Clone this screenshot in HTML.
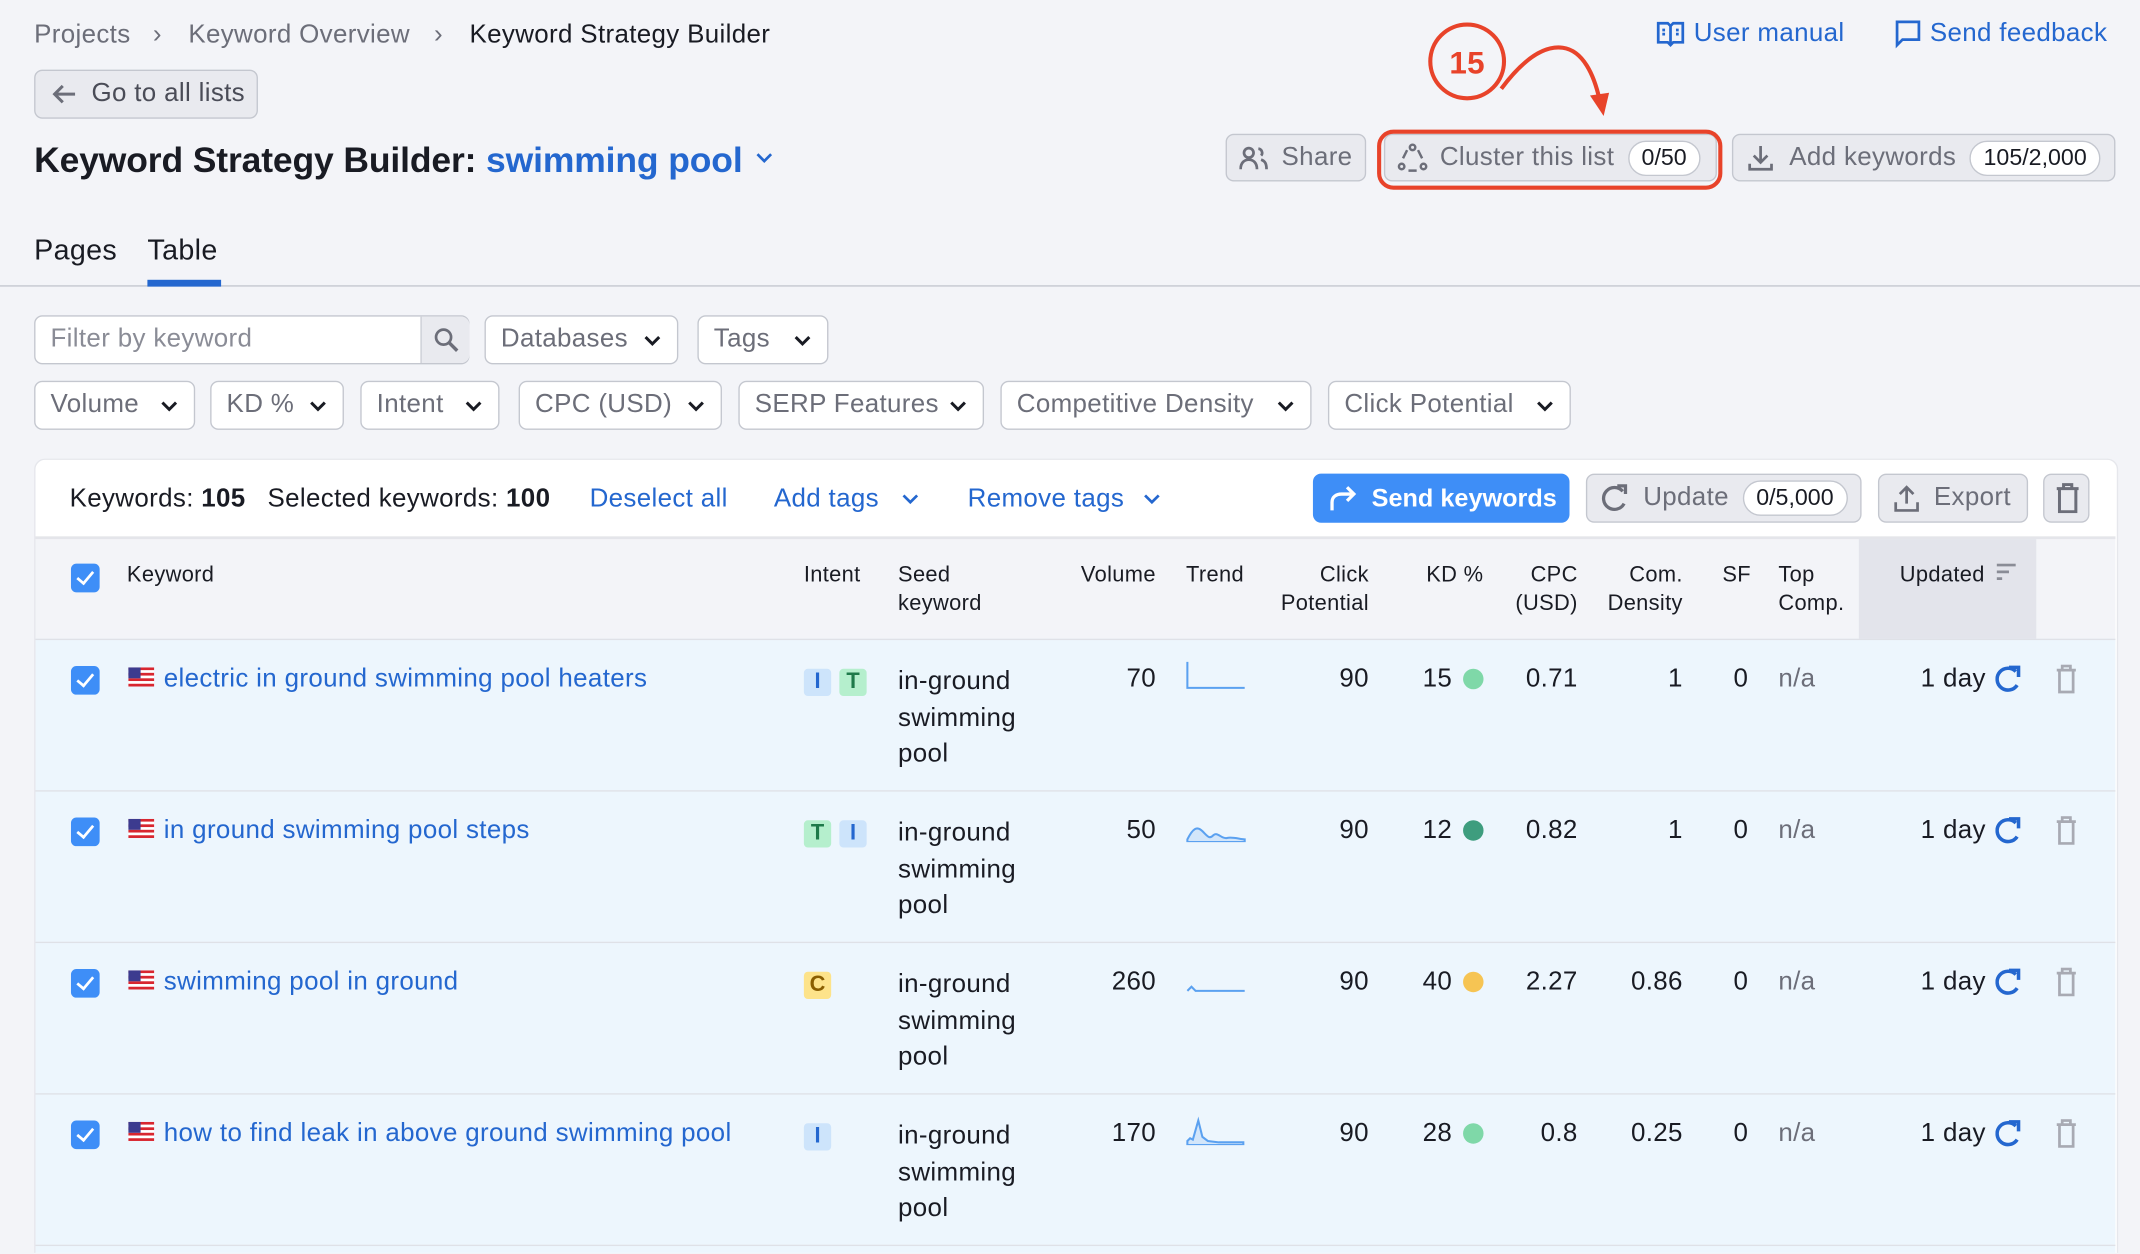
<!DOCTYPE html>
<html><head><meta charset="utf-8">
<style>
html,body{margin:0;padding:0;background:#f3f4f8;overflow:hidden;width:2140px;height:1254px}
#w{position:absolute;left:0;top:0;width:1568px;height:918px;overflow:hidden;transform:scale(1.364796);transform-origin:0 0;font-family:"Liberation Sans",sans-serif;color:#191b23;font-size:19px;letter-spacing:0.25px}
.a{position:absolute;white-space:nowrap}
div.a,div.r{margin-top:2px}
.g{color:#6c6e79}
.b{color:#2467cf}
.btn{position:absolute;box-sizing:border-box;border:1px solid #c4c7cf;border-radius:6px;background:#e9eaef;color:#6c6e79;display:flex;align-items:center;white-space:nowrap}
.dd{position:absolute;box-sizing:border-box;border:1px solid #c4c7cf;border-radius:6px;background:#fff;color:#6c6e79;height:36px;display:flex;align-items:center;padding-left:11px;white-space:nowrap}
.dd svg{position:absolute;right:11px;top:13px}
.pill{background:#fff;border:1px solid #c4c7cf;border-radius:14px;padding:2px 9px;font-size:17px;color:#191b23;margin-left:10px;letter-spacing:0}
.hd{position:absolute;font-size:16px;line-height:21px;color:#191b23;white-space:nowrap;margin-top:1px}
.row{position:absolute;left:26px;width:1524px;height:110px;background:#edf6fd;border-top:1px solid #dfe1e7}
.cb{position:absolute;width:21px;height:21px;border-radius:4px;background:#3e8ef7}
.cb:after{content:"";position:absolute;left:7px;top:3px;width:5px;height:10px;border:solid #fff;border-width:0 2.5px 2.5px 0;transform:rotate(40deg)}
.int{display:inline-block;width:20px;height:20px;border-radius:3px;text-align:center;line-height:20px;font-size:16px;margin-right:6px;font-weight:bold;letter-spacing:0}
.iI{background:#cde4fb;color:#2467cf}.iT{background:#b5efcd;color:#1e7a4a}.iC{background:#fde38a;color:#8a5e00}
.r{position:absolute;text-align:right;white-space:nowrap}
.dot{position:absolute;width:15px;height:15px;border-radius:50%}
</style></head><body><div id="w">

<div class="a g" style="left:25px;top:13px">Projects</div>
<div class="a g" style="left:112px;top:13px">›</div>
<div class="a g" style="left:138px;top:13px">Keyword Overview</div>
<div class="a g" style="left:318px;top:13px">›</div>
<div class="a" style="left:344px;top:13px">Keyword Strategy Builder</div>

<div class="a b" style="left:1213px;top:12px;display:flex;align-items:center"><svg width="22" height="22" viewBox="0 0 22 22"><path d="M2 3h7l2 2 2-2h7v14h-7l-2 2-2-2H2z" fill="none" stroke="#2467cf" stroke-width="2"/><path d="M11 5v14M5 8h2M5 11h2M15 8h2M15 11h2" stroke="#2467cf" stroke-width="2"/></svg><span style="margin-left:6px">User manual</span></div>
<div class="a b" style="left:1388px;top:12px;display:flex;align-items:center"><svg width="20" height="22" viewBox="0 0 20 22"><path d="M2 2h16v13H6l-4 4z" fill="none" stroke="#2467cf" stroke-width="2"/></svg><span style="margin-left:6px">Send feedback</span></div>

<div class="btn" style="left:25px;top:51px;width:164px;height:36px;padding-left:11px"><svg width="20" height="16" viewBox="0 0 20 16"><path d="M18 8H3M9 2L3 8l6 6" fill="none" stroke="#6c6e79" stroke-width="2.2"/></svg><span style="margin-left:10px;color:#4a4c57">Go to all lists</span></div>

<div class="a" style="left:25px;top:100px;font-size:26px;font-weight:bold;letter-spacing:-0.1px">Keyword Strategy Builder: <span style="color:#2467cf">swimming pool</span></div>
<svg class="a" style="left:553px;top:111px" width="14" height="10" viewBox="0 0 14 10"><path d="M2 2l5 5 5-5" fill="none" stroke="#2467cf" stroke-width="2"/></svg>

<div class="btn" style="left:898px;top:98px;width:103px;height:35px;padding-left:9px"><svg width="22" height="20" viewBox="0 0 22 20"><circle cx="7" cy="6" r="3.5" fill="none" stroke="#6c6e79" stroke-width="2"/><path d="M1 18c0-5 3-7 6-7s6 2 6 7M14 3a3 3 0 012 5M16 11c3 1 4 3 4 7" fill="none" stroke="#6c6e79" stroke-width="2"/></svg><span style="margin-left:9px">Share</span></div>
<div class="btn" style="left:1014px;top:98px;width:244px;height:35px;padding-left:9px"><svg width="22" height="22" viewBox="0 0 22 22"><circle cx="11" cy="3" r="2" fill="none" stroke="#6c6e79" stroke-width="1.8"/><circle cx="3" cy="17" r="2" fill="none" stroke="#6c6e79" stroke-width="1.8"/><circle cx="19" cy="17" r="2" fill="none" stroke="#6c6e79" stroke-width="1.8"/><path d="M7 5L4 11M15 5l3 6M8 20h6" fill="none" stroke="#6c6e79" stroke-width="1.8"/></svg><span style="margin-left:9px">Cluster this list</span><span class="pill">0/50</span></div>
<div style="position:absolute;left:1009px;top:95px;width:253px;height:44px;box-sizing:border-box;border:3px solid #e8432a;border-radius:12px"></div>
<div class="btn" style="left:1269px;top:98px;width:281px;height:35px;padding-left:10px"><svg width="20" height="20" viewBox="0 0 20 20"><path d="M10 1v12M5 8l5 5 5-5M2 14v4h16v-4" fill="none" stroke="#6c6e79" stroke-width="2"/></svg><span style="margin-left:11px">Add keywords</span><span class="pill">105/2,000</span></div>

<svg class="a" style="left:1040px;top:15px" width="160" height="80" viewBox="0 0 160 80"><circle cx="35" cy="30" r="27" fill="none" stroke="#e8432a" stroke-width="3"/><text x="35" y="39" text-anchor="middle" font-family="Liberation Sans" font-weight="bold" font-size="23" fill="#e8432a">15</text><path d="M60 50C75 30 90 18 105 20C120 22 128 40 132 58" fill="none" stroke="#e8432a" stroke-width="3"/><path d="M125 55l10 15 4-17z" fill="#e8432a"/></svg>

<div class="a" style="left:25px;top:170px;font-size:21px">Pages</div>
<div class="a" style="left:108px;top:170px;font-size:21px">Table</div>
<div class="a" style="left:0;top:209px;width:1568px;height:1px;background:#c4c7cf;margin:0"></div>
<div class="a" style="left:108px;top:205px;width:54px;height:5px;background:#2467cf;margin:0"></div>

<div class="dd" style="left:25px;top:231px;width:319px;color:#8a8c96">Filter by keyword</div>
<div class="a" style="left:308px;top:232px;width:35px;height:34px;background:#e9eaef;border-left:1px solid #c4c7cf;border-radius:0 6px 6px 0;margin:0"><svg style="position:absolute;left:9px;top:8px" width="18" height="18" viewBox="0 0 18 18"><circle cx="7" cy="7" r="5.5" fill="none" stroke="#6c6e79" stroke-width="2"/><path d="M11 11l6 6" stroke="#6c6e79" stroke-width="2.5"/></svg></div>
<div class="dd" style="left:355px;top:231px;width:142px">Databases<svg width="14" height="9" viewBox="0 0 14 9"><path d="M2 2l5 5 5-5" fill="none" stroke="#191b23" stroke-width="2.2"/></svg></div>
<div class="dd" style="left:511px;top:231px;width:96px">Tags<svg width="14" height="9" viewBox="0 0 14 9"><path d="M2 2l5 5 5-5" fill="none" stroke="#191b23" stroke-width="2.2"/></svg></div>

<div class="dd" style="left:25px;top:279px;width:118px">Volume<svg width="14" height="9" viewBox="0 0 14 9"><path d="M2 2l5 5 5-5" fill="none" stroke="#191b23" stroke-width="2.2"/></svg></div>
<div class="dd" style="left:154px;top:279px;width:98px">KD %<svg width="14" height="9" viewBox="0 0 14 9"><path d="M2 2l5 5 5-5" fill="none" stroke="#191b23" stroke-width="2.2"/></svg></div>
<div class="dd" style="left:264px;top:279px;width:102px">Intent<svg width="14" height="9" viewBox="0 0 14 9"><path d="M2 2l5 5 5-5" fill="none" stroke="#191b23" stroke-width="2.2"/></svg></div>
<div class="dd" style="left:380px;top:279px;width:149px">CPC (USD)<svg width="14" height="9" viewBox="0 0 14 9"><path d="M2 2l5 5 5-5" fill="none" stroke="#191b23" stroke-width="2.2"/></svg></div>
<div class="dd" style="left:541px;top:279px;width:180px">SERP Features<svg width="14" height="9" viewBox="0 0 14 9"><path d="M2 2l5 5 5-5" fill="none" stroke="#191b23" stroke-width="2.2"/></svg></div>
<div class="dd" style="left:733px;top:279px;width:228px">Competitive Density<svg width="14" height="9" viewBox="0 0 14 9"><path d="M2 2l5 5 5-5" fill="none" stroke="#191b23" stroke-width="2.2"/></svg></div>
<div class="dd" style="left:973px;top:279px;width:178px">Click Potential<svg width="14" height="9" viewBox="0 0 14 9"><path d="M2 2l5 5 5-5" fill="none" stroke="#191b23" stroke-width="2.2"/></svg></div>

<div class="a" style="left:25px;top:336px;width:1525px;height:600px;background:#fff;border-radius:8px;border:1px solid #e6e7ec;margin:0"></div>
<div class="a" style="left:51px;top:353px">Keywords: <b>105</b></div>
<div class="a" style="left:196px;top:353px">Selected keywords: <b>100</b></div>
<div class="a b" style="left:432px;top:353px">Deselect all</div>
<div class="a b" style="left:567px;top:353px">Add tags</div>
<svg class="a" style="left:660px;top:361px" width="14" height="9" viewBox="0 0 14 9"><path d="M2 2l5 5 5-5" fill="none" stroke="#2467cf" stroke-width="2"/></svg>
<div class="a b" style="left:709px;top:353px">Remove tags</div>
<svg class="a" style="left:837px;top:361px" width="14" height="9" viewBox="0 0 14 9"><path d="M2 2l5 5 5-5" fill="none" stroke="#2467cf" stroke-width="2"/></svg>

<div class="btn" style="left:962px;top:347px;width:188px;height:36px;background:#3e8ef7;border-color:#3e8ef7;color:#fff;padding-left:10px"><svg width="22" height="22" viewBox="0 0 22 22"><path d="M3 20v-6c0-4 3-6 7-6h9M14 3l5 5-5 5" fill="none" stroke="#fff" stroke-width="2.4"/></svg><span style="margin-left:10px;font-weight:bold;font-size:18.5px;letter-spacing:0">Send keywords</span></div>
<div class="btn" style="left:1162px;top:347px;width:202px;height:36px;padding-left:10px"><svg width="20" height="22" viewBox="0 0 20 22"><path d="M16 6A8 8 0 1 0 17 15" fill="none" stroke="#6c6e79" stroke-width="2.4"/><path d="M12 2h6v6" fill="none" stroke="#6c6e79" stroke-width="2.4"/></svg><span style="margin-left:11px">Update</span><span class="pill">0/5,000</span></div>
<div class="btn" style="left:1376px;top:347px;width:110px;height:36px;padding-left:10px"><svg width="20" height="22" viewBox="0 0 20 22"><path d="M10 15V3M5 8l5-5 5 5M2 14v6h16v-6" fill="none" stroke="#6c6e79" stroke-width="2"/></svg><span style="margin-left:10px">Export</span></div>
<div class="btn" style="left:1497px;top:347px;width:34px;height:36px;padding-left:8px"><svg width="18" height="22" viewBox="0 0 18 22"><path d="M1 4h16M6 4V1h6v3M3 4v17h12V4" fill="none" stroke="#6c6e79" stroke-width="2.2"/></svg></div>

<div class="a" style="left:26px;top:393px;width:1524px;height:76px;background:#f3f4f8;border-top:2px solid #e4e5ea;margin:0"></div>
<div class="a" style="left:1362px;top:395px;width:130px;height:74px;background:#e3e4eb;margin:0"></div>
<div class="cb" style="left:52px;top:413px"></div>
<div class="hd" style="left:93px;top:410px">Keyword</div>
<div class="hd" style="left:589px;top:410px">Intent</div>
<div class="hd" style="left:658px;top:410px">Seed<br>keyword</div>
<div class="hd" style="left:792px;top:410px">Volume</div>
<div class="hd" style="left:869px;top:410px">Trend</div>
<div class="hd" style="left:903px;top:410px;width:100px;text-align:right">Click<br>Potential</div>
<div class="hd" style="left:1045px;top:410px">KD %</div>
<div class="hd" style="left:1100px;top:410px;width:56px;text-align:right">CPC<br>(USD)</div>
<div class="hd" style="left:1160px;top:410px;width:73px;text-align:right">Com.<br>Density</div>
<div class="hd" style="left:1262px;top:410px">SF</div>
<div class="hd" style="left:1303px;top:410px">Top<br>Comp.</div>
<div class="hd" style="left:1392px;top:410px">Updated</div>
<svg class="a" style="left:1463px;top:413px" width="14" height="12" viewBox="0 0 14 12"><path d="M0 1h14M0 6h9M0 11h4" stroke="#8a8c96" stroke-width="2"/></svg>

<div class="row" style="top:468px"></div>
<div class="row" style="top:579px"></div>
<div class="row" style="top:690px"></div>
<div class="row" style="top:801px"></div>
<div class="row" style="top:912px;height:40px"></div>

<div style="position:absolute;left:0;top:470px;width:1568px;height:111px">
 <div class="cb" style="left:52px;top:18px"></div>
 <svg class="a" style="left:94px;top:19px" width="19" height="14"><rect width="19" height="14" fill="#fff"/><g fill="#d8262f"><rect y="0" width="19" height="2"/><rect y="4" width="19" height="2"/><rect y="8" width="19" height="2"/><rect y="12" width="19" height="2"/></g><rect width="9" height="8" fill="#3c3b8f"/></svg>
 <div class="a b" style="left:120px;top:15px">electric in ground swimming pool heaters</div>
 <div class="a" style="left:589px;top:16px"><span class="int iI">I</span><span class="int iT">T</span></div>
 <div class="a" style="left:658px;top:15px;line-height:26.5px">in-ground<br>swimming<br>pool</div>
 <div class="r" style="right:721px;top:15px">70</div>
 <svg class="a" style="left:869px;top:14px" width="44" height="22"><path d="M1 1v19h42" fill="none" stroke="#5ba1f0" stroke-width="1.5"/></svg>
 <div class="r" style="right:565px;top:15px">90</div>
 <div class="r" style="right:504px;top:15px">15</div><div class="dot" style="left:1072px;top:20px;background:#7fd8a8"></div>
 <div class="r" style="right:412px;top:15px">0.71</div>
 <div class="r" style="right:335px;top:15px">1</div>
 <div class="r" style="right:287px;top:15px">0</div>
 <div class="a g" style="left:1303px;top:15px">n/a</div>
 <div class="r" style="right:113px;top:15px">1 day</div>
 <svg class="a" style="left:1462px;top:17px" width="19" height="22" viewBox="0 0 19 22"><path d="M15 5A8 8 0 1 0 16 15" fill="none" stroke="#2467cf" stroke-width="2.6"/><path d="M10 2h7v7" fill="none" stroke="#2467cf" stroke-width="2.6"/></svg>
 <svg class="a" style="left:1506px;top:17px" width="16" height="22" viewBox="0 0 16 22"><path d="M1 4h14M5 4V1h6v3M3 4v16h10V4" fill="none" stroke="#a8aab3" stroke-width="2"/></svg>
</div>

<div style="position:absolute;left:0;top:581px;width:1568px;height:111px">
 <div class="cb" style="left:52px;top:18px"></div>
 <svg class="a" style="left:94px;top:19px" width="19" height="14"><rect width="19" height="14" fill="#fff"/><g fill="#d8262f"><rect y="0" width="19" height="2"/><rect y="4" width="19" height="2"/><rect y="8" width="19" height="2"/><rect y="12" width="19" height="2"/></g><rect width="9" height="8" fill="#3c3b8f"/></svg>
 <div class="a b" style="left:120px;top:15px">in ground swimming pool steps</div>
 <div class="a" style="left:589px;top:16px"><span class="int iT">T</span><span class="int iI">I</span></div>
 <div class="a" style="left:658px;top:15px;line-height:26.5px">in-ground<br>swimming<br>pool</div>
 <div class="r" style="right:721px;top:15px">50</div>
 <svg class="a" style="left:869px;top:14px" width="44" height="22"><path d="M1 20C5 12 8 10 12 14S17 20 20 17 26 20 30 19 40 20 43 20V22H1z" fill="#d3e6fa" stroke="#5ba1f0" stroke-width="1.5"/></svg>
 <div class="r" style="right:565px;top:15px">90</div>
 <div class="r" style="right:504px;top:15px">12</div><div class="dot" style="left:1072px;top:20px;background:#3e9d7e"></div>
 <div class="r" style="right:412px;top:15px">0.82</div>
 <div class="r" style="right:335px;top:15px">1</div>
 <div class="r" style="right:287px;top:15px">0</div>
 <div class="a g" style="left:1303px;top:15px">n/a</div>
 <div class="r" style="right:113px;top:15px">1 day</div>
 <svg class="a" style="left:1462px;top:17px" width="19" height="22" viewBox="0 0 19 22"><path d="M15 5A8 8 0 1 0 16 15" fill="none" stroke="#2467cf" stroke-width="2.6"/><path d="M10 2h7v7" fill="none" stroke="#2467cf" stroke-width="2.6"/></svg>
 <svg class="a" style="left:1506px;top:17px" width="16" height="22" viewBox="0 0 16 22"><path d="M1 4h14M5 4V1h6v3M3 4v16h10V4" fill="none" stroke="#a8aab3" stroke-width="2"/></svg>
</div>

<div style="position:absolute;left:0;top:692px;width:1568px;height:111px">
 <div class="cb" style="left:52px;top:18px"></div>
 <svg class="a" style="left:94px;top:19px" width="19" height="14"><rect width="19" height="14" fill="#fff"/><g fill="#d8262f"><rect y="0" width="19" height="2"/><rect y="4" width="19" height="2"/><rect y="8" width="19" height="2"/><rect y="12" width="19" height="2"/></g><rect width="9" height="8" fill="#3c3b8f"/></svg>
 <div class="a b" style="left:120px;top:15px">swimming pool in ground</div>
 <div class="a" style="left:589px;top:16px"><span class="int iC">C</span></div>
 <div class="a" style="left:658px;top:15px;line-height:26.5px">in-ground<br>swimming<br>pool</div>
 <div class="r" style="right:721px;top:15px">260</div>
 <svg class="a" style="left:869px;top:14px" width="44" height="22"><path d="M1 20l3-3 3 3h36" fill="none" stroke="#5ba1f0" stroke-width="1.5"/></svg>
 <div class="r" style="right:565px;top:15px">90</div>
 <div class="r" style="right:504px;top:15px">40</div><div class="dot" style="left:1072px;top:20px;background:#f6c453"></div>
 <div class="r" style="right:412px;top:15px">2.27</div>
 <div class="r" style="right:335px;top:15px">0.86</div>
 <div class="r" style="right:287px;top:15px">0</div>
 <div class="a g" style="left:1303px;top:15px">n/a</div>
 <div class="r" style="right:113px;top:15px">1 day</div>
 <svg class="a" style="left:1462px;top:17px" width="19" height="22" viewBox="0 0 19 22"><path d="M15 5A8 8 0 1 0 16 15" fill="none" stroke="#2467cf" stroke-width="2.6"/><path d="M10 2h7v7" fill="none" stroke="#2467cf" stroke-width="2.6"/></svg>
 <svg class="a" style="left:1506px;top:17px" width="16" height="22" viewBox="0 0 16 22"><path d="M1 4h14M5 4V1h6v3M3 4v16h10V4" fill="none" stroke="#a8aab3" stroke-width="2"/></svg>
</div>

<div style="position:absolute;left:0;top:803px;width:1568px;height:111px">
 <div class="cb" style="left:52px;top:18px"></div>
 <svg class="a" style="left:94px;top:19px" width="19" height="14"><rect width="19" height="14" fill="#fff"/><g fill="#d8262f"><rect y="0" width="19" height="2"/><rect y="4" width="19" height="2"/><rect y="8" width="19" height="2"/><rect y="12" width="19" height="2"/></g><rect width="9" height="8" fill="#3c3b8f"/></svg>
 <div class="a b" style="left:120px;top:15px">how to find leak in above ground swimming pool</div>
 <div class="a" style="left:589px;top:16px"><span class="int iI">I</span></div>
 <div class="a" style="left:658px;top:15px;line-height:26.5px">in-ground<br>swimming<br>pool</div>
 <div class="r" style="right:721px;top:15px">170</div>
 <svg class="a" style="left:869px;top:14px" width="44" height="22"><path d="M1 19l2-2 2 1 4-14 3 12 4 3 8 1h18v2H1z" fill="#d3e6fa" stroke="#5ba1f0" stroke-width="1.5"/></svg>
 <div class="r" style="right:565px;top:15px">90</div>
 <div class="r" style="right:504px;top:15px">28</div><div class="dot" style="left:1072px;top:20px;background:#7fd8a8"></div>
 <div class="r" style="right:412px;top:15px">0.8</div>
 <div class="r" style="right:335px;top:15px">0.25</div>
 <div class="r" style="right:287px;top:15px">0</div>
 <div class="a g" style="left:1303px;top:15px">n/a</div>
 <div class="r" style="right:113px;top:15px">1 day</div>
 <svg class="a" style="left:1462px;top:17px" width="19" height="22" viewBox="0 0 19 22"><path d="M15 5A8 8 0 1 0 16 15" fill="none" stroke="#2467cf" stroke-width="2.6"/><path d="M10 2h7v7" fill="none" stroke="#2467cf" stroke-width="2.6"/></svg>
 <svg class="a" style="left:1506px;top:17px" width="16" height="22" viewBox="0 0 16 22"><path d="M1 4h14M5 4V1h6v3M3 4v16h10V4" fill="none" stroke="#a8aab3" stroke-width="2"/></svg>
</div>

</div></body></html>
